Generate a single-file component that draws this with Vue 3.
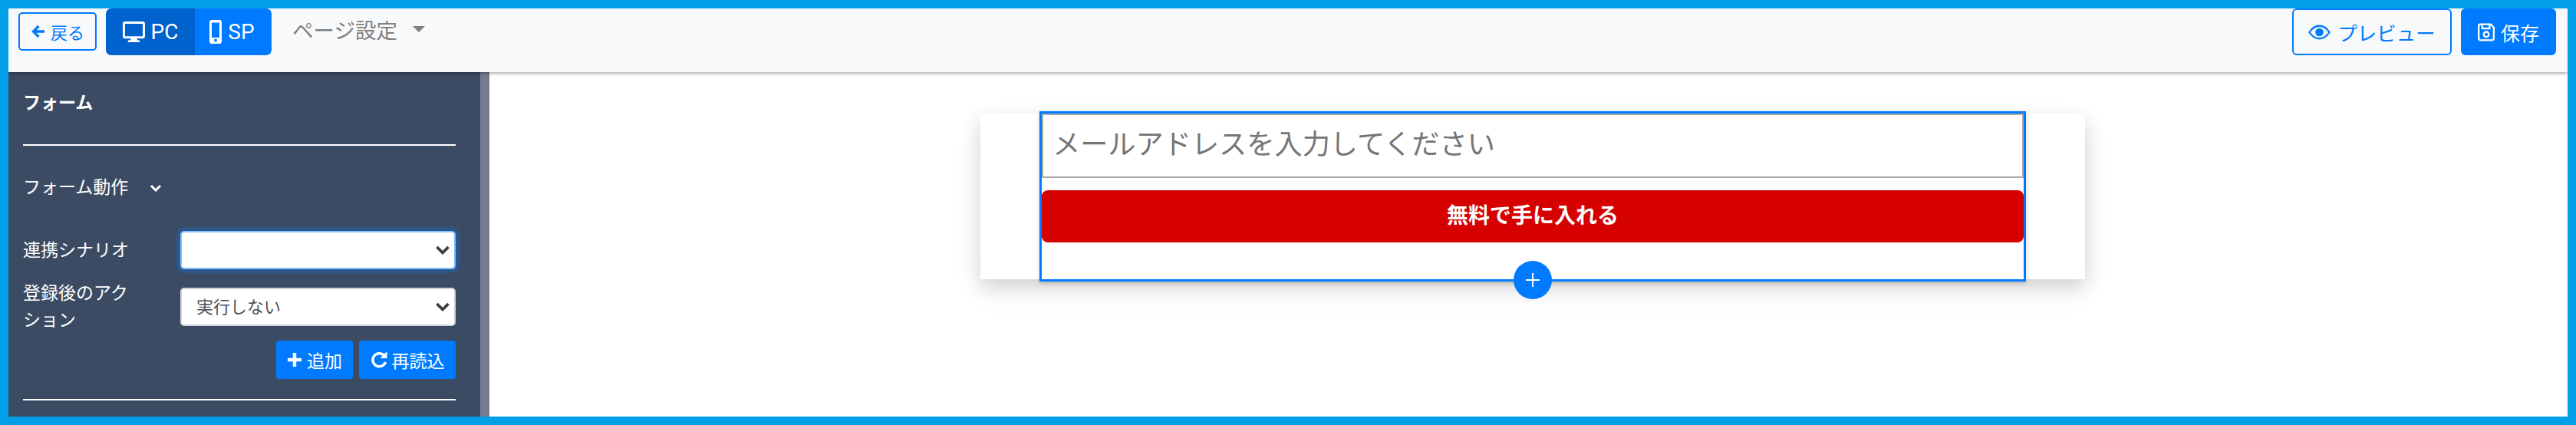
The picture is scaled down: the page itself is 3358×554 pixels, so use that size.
<template>
  <div class="frame">
    <header class="topbar">
      <div class="topbar-left">
        <button class="btn-back">
          <svg class="ico-back" viewBox="0 0 20 20"><path d="M18 10H4M10.500 3 3.500 10l7 7" /></svg>
          戻る
        </button>
        <div class="device-group">
          <button class="device active">
            <svg class="ico-device" viewBox="0 0 30 28"><path fill-rule="evenodd" d="M3 0h24a3 3 0 0 1 3 3v17a3 3 0 0 1-3 3h-8l1 2.500h3V28H7v-2.500h3l1-2.500H3a3 3 0 0 1-3-3V3a3 3 0 0 1 3-3Zm0 3v17h24V3H3Z" /></svg>
            PC
          </button>
          <button class="device">
            <svg class="ico-phone" viewBox="0 0 16 31"><path fill-rule="evenodd" d="M3 0h10a3 3 0 0 1 3 3v25a3 3 0 0 1-3 3H3a3 3 0 0 1-3-3V3a3 3 0 0 1 3-3Zm0 3.500V23h10V3.500H3ZM8 24.500a2 2 0 1 0 0 4 2 2 0 0 0 0-4Z" /></svg>
            SP
          </button>
        </div>
        <div class="page-settings">
          ページ設定
          <span class="caret"></span>
        </div>
      </div>
      <div class="topbar-right">
        <button class="btn-preview">
          <svg class="ico-eye" viewBox="0 0 30 20"><path class="eye-line" d="M1.500 10C5 4.500 9.500 1.500 15 1.500S25 4.500 28.500 10C25 15.500 20.500 18.500 15 18.500S5 15.500 1.500 10Z" /><circle class="eye-ball" cx="15" cy="10" r="5.500" /></svg>
          プレビュー
        </button>
        <button class="btn-save">
          <svg class="ico-save" viewBox="0 0 23 24"><path class="save-line" d="M3 1.250h14.500l4.250 4.250V21a1.750 1.750 0 0 1-1.750 1.750H3A1.750 1.750 0 0 1 1.250 21V3A1.750 1.750 0 0 1 3 1.250ZM6 1.500v5.500h10V1.500" /><circle class="save-line" cx="11.500" cy="15" r="3.500" /></svg>
          保存
        </button>
      </div>
    </header>

    <div class="workspace">
      <aside class="sidebar">
        <div class="side-title">フォーム</div>
        <hr class="side-rule first" />
        <div class="side-section">
          フォーム動作
          <svg class="ico-chevron" viewBox="0 0 16 10"><path d="M2 2l6 6 6-6" /></svg>
        </div>

        <div class="field first-field">
          <label>連携シナリオ</label>
          <div class="select-wrap">
            <select class="select focused"><option></option></select>
            <svg class="select-arrow" viewBox="0 0 20 14"><path d="M2.500 3 10 10.500 17.500 3" /></svg>
          </div>
        </div>
        <div class="field second-field">
          <label>登録後のアクション</label>
          <div class="select-wrap">
            <select class="select"><option>実行しない</option></select>
            <svg class="select-arrow" viewBox="0 0 20 14"><path d="M2.500 3 10 10.500 17.500 3" /></svg>
          </div>
        </div>

        <div class="side-actions">
          <button class="btn-side add">
            <svg class="ico-plus" viewBox="0 0 20 20"><path d="M10 1v18M1 10h18" /></svg>
            追加
          </button>
          <button class="btn-side reload">
            <svg class="ico-reload" viewBox="0 0 22 24"><path class="reload-line" d="M18.500 7.500A8.500 8.500 0 1 0 19.500 15" /><path class="reload-head" d="M21.500 1V10h-9Z" /></svg>
            再読込
          </button>
        </div>
        <hr class="side-rule last" />
      </aside>

      <main class="canvas">
        <section class="lp-card">
          <div class="form-block">
            <input class="email-input" type="text" placeholder="メールアドレスを入力してください" />
            <button class="submit-btn">無料で手に入れる</button>
            <button class="add-block">
              <svg viewBox="0 0 18 18"><path d="M9 0v18M0 9h18" /></svg>
            </button>
          </div>
        </section>
      </main>
    </div>
  </div>
</template>

<script setup>
</script>

<style>
html,
body {
  margin: 0;
  background: #fff;
}
</style>

<style scoped>
.frame {
  box-sizing: border-box;
  width: 3358px;
  height: 554px;
  border: 11px solid #009fe8;
  display: flex;
  flex-direction: column;
  overflow: hidden;
  font-family: Roboto, "Noto Sans CJK JP", sans-serif;
  background: #fff;
}
button {
  font-family: inherit;
  cursor: pointer;
}

.topbar {
  flex: 0 0 83px;
  display: flex;
  justify-content: space-between;
  align-items: flex-start;
  background: #f8f9fa;
  box-shadow: 0 2px 4px rgba(0, 0, 0, 0.3);
  position: relative;
  z-index: 2;
}
.topbar-left {
  display: flex;
  align-items: flex-start;
}
.topbar-right {
  display: flex;
  align-items: flex-start;
  gap: 12px;
  margin-right: 15px;
}

.btn-back {
  box-sizing: border-box;
  width: 102px;
  height: 50px;
  margin: 5px 0 0 13px;
  padding: 0;
  display: flex;
  align-items: center;
  justify-content: center;
  gap: 6px;
  font-size: 22px;
  color: #007bff;
  background: transparent;
  border: 2px solid #007bff;
  border-radius: 5px;
}
.ico-back {
  width: 20px;
  height: 20px;
  fill: none;
  stroke: #007bff;
  stroke-width: 3.4;
}

.device-group {
  display: flex;
  height: 61px;
  margin-left: 12px;
  border-radius: 7px;
  overflow: hidden;
}
.device {
  border: 0;
  padding: 0;
  display: flex;
  align-items: center;
  justify-content: center;
  gap: 8px;
  width: 100px;
  color: #fff;
  background: #007bff;
  font-size: 28px;
}
.device.active {
  width: 116px;
  background: #0062cc;
}
.ico-device {
  width: 29px;
  height: 27px;
  fill: #fff;
}
.ico-phone {
  width: 16px;
  height: 31px;
  margin-left: -3px;
  fill: #fff;
}

.page-settings {
  display: flex;
  align-items: center;
  height: 50px;
  margin: 2px 0 0 27px;
  font-size: 27.500px;
  color: #808080;
}
.caret {
  width: 0;
  height: 0;
  margin-left: 20px;
  border-left: 8px solid transparent;
  border-right: 8px solid transparent;
  border-top: 8px solid #808080;
}

.btn-preview,
.btn-save {
  box-sizing: border-box;
  height: 61px;
  padding: 0;
  display: flex;
  align-items: center;
  justify-content: center;
  border-radius: 6px;
}
.btn-preview {
  width: 208px;
  gap: 9px;
  font-size: 25.500px;
  color: #007bff;
  background: transparent;
  border: 2px solid #007bff;
}
.btn-save {
  width: 124px;
  gap: 8px;
  font-size: 25px;
  color: #fff;
  background: #007bff;
  border: 0;
}
.ico-eye {
  width: 29px;
  height: 20px;
}
.eye-line {
  fill: none;
  stroke: #007bff;
  stroke-width: 2.4;
}
.eye-ball {
  fill: #007bff;
}
.ico-save {
  width: 22px;
  height: 24px;
}
.save-line {
  fill: none;
  stroke: #fff;
  stroke-width: 2.4;
}

.workspace {
  flex: 1;
  display: flex;
  min-height: 0;
}
.sidebar {
  box-sizing: border-box;
  flex: 0 0 627px;
  padding: 26px 32px 0 19px;
  background: #3c4b64;
  border-right: 12px solid #757c8f;
  color: #fff;
  font-size: 23px;
}
.side-title {
  line-height: 30px;
  font-weight: 700;
}
.side-rule {
  height: 2px;
  margin: 0;
  border: 0;
  background: #fff;
}
.side-rule.first {
  margin-top: 38px;
}
.side-rule.last {
  margin-top: 26px;
}
.side-section {
  display: flex;
  align-items: center;
  margin-top: 40px;
  line-height: 30px;
}
.ico-chevron {
  width: 16px;
  height: 10px;
  margin-left: 28px;
  fill: none;
  stroke: #fff;
  stroke-width: 3;
}

.field {
  display: grid;
  grid-template-columns: 205px 1fr;
  align-items: center;
}
.field label {
  line-height: 35px;
  width: 145px;
}
.first-field {
  margin-top: 41px;
}
.second-field {
  margin-top: 14px;
}
.select-wrap {
  position: relative;
  height: 50px;
}
.select {
  box-sizing: border-box;
  width: 100%;
  height: 50px;
  padding: 0 40px 0 19px;
  appearance: none;
  background: #fff;
  border: 2px solid #ced4da;
  border-radius: 5px;
  color: #495057;
  font-family: inherit;
  font-size: 22px;
  outline: 0;
}
.select.focused {
  border-color: #80bdff;
  box-shadow: 0 0 0 5px rgba(0, 123, 255, 0.25);
}
.select-arrow {
  position: absolute;
  top: 18px;
  right: 7px;
  width: 20px;
  height: 14px;
  fill: none;
  stroke: #343a40;
  stroke-width: 3.6;
  pointer-events: none;
}

.side-actions {
  display: flex;
  justify-content: flex-end;
  gap: 8px;
  margin-top: 9px;
}
.btn-side {
  height: 50px;
  padding: 0;
  display: flex;
  align-items: center;
  justify-content: center;
  gap: 6px;
  border: 0;
  border-radius: 4px;
  color: #fff;
  background: #007bff;
  font-size: 23px;
}
.btn-side.add {
  width: 100px;
}
.btn-side.reload {
  width: 126px;
}
.ico-plus {
  width: 20px;
  height: 20px;
  fill: none;
  stroke: #fff;
  stroke-width: 4.500;
}
.ico-reload {
  width: 22px;
  height: 24px;
}
.reload-line {
  fill: none;
  stroke: #fff;
  stroke-width: 3.4;
}
.reload-head {
  fill: #fff;
}

.canvas {
  flex: 1;
  background: #fff;
}
.lp-card {
  width: 1440px;
  height: 216px;
  margin: 54px 0 0 640px;
  background: #fff;
  box-shadow: 0 10px 24px rgba(0, 0, 0, 0.16), 0 16px 48px rgba(0, 0, 0, 0.04);
}
.form-block {
  box-sizing: border-box;
  position: relative;
  height: 222px;
  margin: 0 77px;
  top: -3px;
  border: 3px solid #007bff;
  box-shadow: 0 2px 5px rgba(0, 0, 0, 0.2);
  background: #fff;
  display: flex;
  flex-direction: column;
}
.email-input {
  box-sizing: border-box;
  flex: 0 0 84px;
  width: 100%;
  padding: 0 12px 3px;
  border: 2px solid #a9a9a9;
  border-radius: 0;
  outline: 0;
  font-family: inherit;
  font-size: 36.200px;
}
.email-input::placeholder {
  color: #757575;
  opacity: 1;
}
.submit-btn {
  flex: 0 0 68px;
  margin-top: 16px;
  padding: 0 0 7px;
  border: 0;
  border-radius: 8px;
  background: #d60000;
  color: #fff;
  font-size: 28px;
  font-weight: 700;
}
.add-block {
  position: absolute;
  left: 50%;
  bottom: -26px;
  width: 50px;
  height: 50px;
  margin-left: -25px;
  padding: 0;
  display: flex;
  align-items: center;
  justify-content: center;
  border: 0;
  border-radius: 50%;
  background: #007bff;
}
.add-block svg {
  width: 18px;
  height: 18px;
  fill: none;
  stroke: #fff;
  stroke-width: 2;
}
</style>
